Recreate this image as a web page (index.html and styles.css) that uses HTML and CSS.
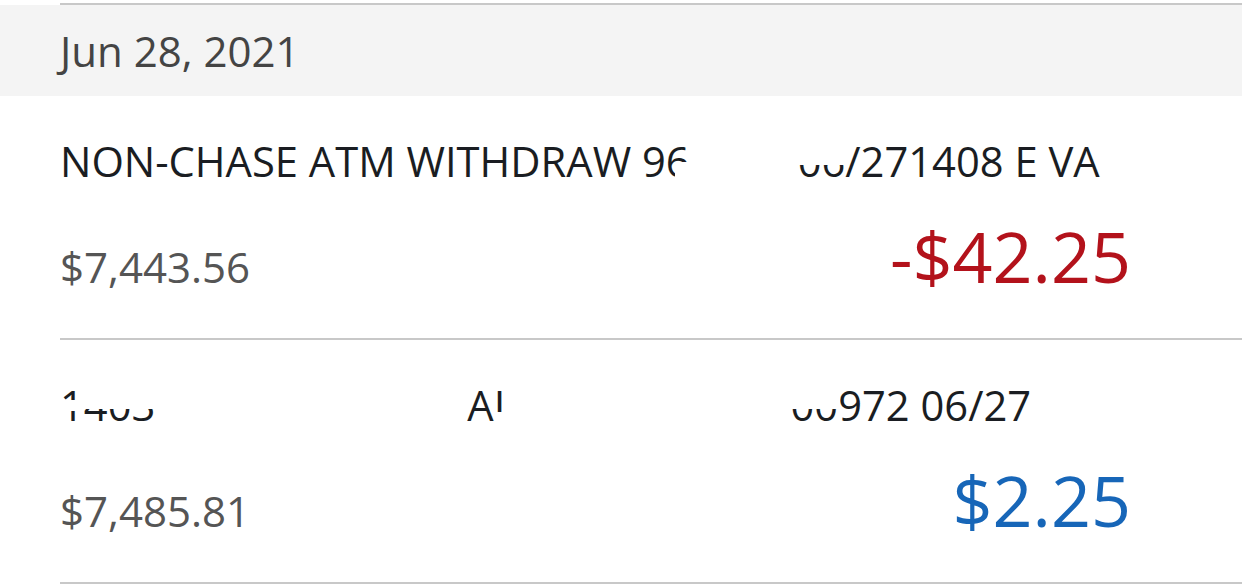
FILE: index.html
```html
<!DOCTYPE html>
<html lang="en">
<head>
<meta charset="utf-8">
<title>Transactions</title>
<link rel="stylesheet" href="styles.css">
</head>
<body>
<div class="list">
  <div class="rule"></div>
  <div class="date-head">Jun 28, 2021</div>
  <div class="txn">
    <div class="desc">NON-CHASE ATM WITHDRAW 9<span class="cut cut-r">6</span><span class="gap gap-1"></span><span class="cut cut-t">06</span>/271408 E VA</div>
    <div class="amounts"><span class="balance">$7,443.56</span><span class="amount debit">-$42.25</span></div>
  </div>
  <div class="rule"></div>
  <div class="txn">
    <div class="desc"><span class="cut cut-m">1</span><span class="cut cut-t">403</span><span class="gap gap-2"></span><span class="cut cut-b">AL</span><span class="gap gap-3"></span><span class="cut cut-t">00</span>972 06/27</div>
    <div class="amounts"><span class="balance">$7,485.81</span><span class="amount credit">$2.25</span></div>
  </div>
  <div class="rule"></div>
</div>
</body>
</html>
```
FILE: styles.css
```css
html, body {
  margin: 0;
  padding: 0;
  background: #ffffff;
}
body {
  width: 1242px;
  overflow: hidden;
  font-family: "Open Sans", "Noto Sans", sans-serif;
}
.list {
  padding-top: 3px;
}
.rule {
  height: 2px;
  margin-left: 60px;
  background: #c8c8c8;
}
.date-head {
  height: 91px;
  box-sizing: border-box;
  padding: 25px 0 0 60px;
  background: #f4f4f4;
  font-size: 42px;
  line-height: 42px;
  color: #444444;
}
.txn {
  padding: 44px 111px 47px 60px;
}
.desc {
  font-size: 41.7px;
  line-height: 42px;
  color: #1a1d22;
  white-space: nowrap;
}
.amounts {
  display: flex;
  justify-content: space-between;
  align-items: baseline;
  margin-top: 39px;
}
.balance {
  font-size: 42px;
  line-height: 42px;
  color: #555555;
}
.amount {
  font-size: 70px;
  line-height: 70px;
}
.debit { color: #b3121b; }
.credit { color: #1766b8; }

.gap { display: inline-block; height: 0; }
.gap-1 { width: 108px; }
.gap-2 { width: 312px; }
.gap-3 { width: 275px; }

.cut { position: relative; }
.cut::after {
  content: "";
  position: absolute;
  background: #ffffff;
}
.cut-r::after { left: 40%; right: -2px; top: 30px; bottom: 0; }
.cut-t::after { left: -2px; right: -2px; top: 0; height: 33px; }
.cut-m::after { left: -2px; right: -2px; top: 24px; height: 11px; }
.cut-b::after { left: 58%; right: -2px; top: 36px; bottom: 0; }
```
